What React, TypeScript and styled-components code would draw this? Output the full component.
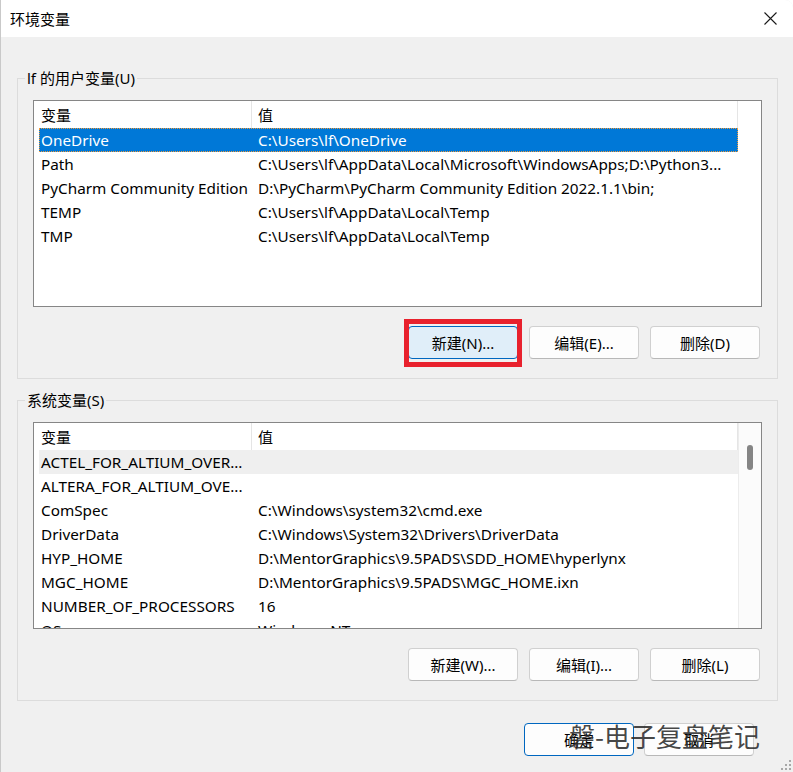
import React from "react";
import styled, { createGlobalStyle } from "styled-components";

const GlobalStyle = createGlobalStyle`
  html, body { margin: 0; padding: 0; background: #ffffff; }
  body {
    font-family: "Noto Sans", "Noto Sans CJK SC", sans-serif;
    color: #000;
  }
  * { box-sizing: border-box; }
`;

const Window = styled.div`
  position: relative;
  width: 793px;
  height: 772px;
  background: #f0f0f0;
  border-left: 1px solid #c9c9c9;
  border-top-right-radius: 8px;
  overflow: hidden;
  display: flex;
  flex-direction: column;
`;

const TitleBar = styled.div`
  height: 37px;
  background: #ffffff;
  display: flex;
  align-items: center;
  justify-content: space-between;
  padding-left: 9px;
  flex-shrink: 0;
`;

const Title = styled.div`
  font-family: "Noto Sans CJK SC", sans-serif;
  font-size: 15px;
  line-height: 20px;
`;

const CloseButton = styled.div`
  width: 46px;
  height: 37px;
  display: flex;
  align-items: center;
  justify-content: center;
`;

const Content = styled.div`
  padding: 31px 15px 0 16px;
  display: flex;
  flex-direction: column;
`;

const GroupBox = styled.fieldset<{ $mt?: number }>`
  margin: ${(p) => p.$mt ?? 0}px 0 0 0;
  padding: 12px 15px 19px 15px;
  border: 1px solid #dcdcdc;
  min-width: 0;
`;

const Legend = styled.legend`
  font-family: "Noto Sans", "Noto Sans CJK SC", sans-serif;
  font-size: 15px;
  line-height: 20px;
  padding: 0 2px;
  margin-left: -8px;
`;

const ListView = styled.div`
  height: 207px;
  border: 1px solid #868686;
  background: #ffffff;
  display: flex;
  overflow: hidden;
`;

const ListMain = styled.div`
  flex: 1;
  padding-left: 5px;
  overflow: hidden;
`;

const Header = styled.div`
  height: 27px;
  display: flex;
`;

const HeaderCell = styled.div<{ $w?: number }>`
  ${(p) => (p.$w ? `width: ${p.$w}px;` : "flex: 1;")}
  padding-left: ${(p) => (p.$w ? 2 : 6)}px;
  border-right: 1px solid #e5e5e5;
  font-family: "Noto Sans CJK SC", sans-serif;
  font-size: 15px;
  line-height: 27px;
  white-space: nowrap;
`;

const Row = styled.div<{ $state?: "selected" | "hover" }>`
  height: 24px;
  display: flex;
  background: ${(p) =>
    p.$state === "selected" ? "#0078d7" : p.$state === "hover" ? "#efefef" : "transparent"};
  color: ${(p) => (p.$state === "selected" ? "#ffffff" : "#000000")};
  outline: ${(p) => (p.$state === "selected" ? "1px dotted #f09a3a" : "none")};
  outline-offset: -1px;
`;

const Cell = styled.div<{ $w?: number }>`
  ${(p) => (p.$w ? `width: ${p.$w}px;` : "flex: 1;")}
  padding-left: ${(p) => (p.$w ? 2 : 6)}px;
  font-size: 15.3px;
  line-height: 24px;
  white-space: nowrap;
  overflow: hidden;
`;

const Side = styled.div<{ $scroll?: boolean }>`
  width: 23px;
  flex-shrink: 0;
  border-left: ${(p) => (p.$scroll ? "1px solid #ececec" : "none")};
  background: ${(p) => (p.$scroll ? "#fbfbfb" : "#ffffff")};
  display: flex;
  justify-content: center;
  padding-top: 22px;
`;

const Thumb = styled.div`
  width: 6px;
  height: 25px;
  border-radius: 3px;
  background: #858585;
`;

const ButtonRow = styled.div<{ $mt: number; $pr: number }>`
  display: flex;
  justify-content: flex-end;
  gap: 11px;
  margin-top: ${(p) => p.$mt}px;
  padding-right: ${(p) => p.$pr}px;
`;

const Button = styled.div<{ $variant?: "focus" | "default" }>`
  position: relative;
  width: 110px;
  height: 33px;
  display: flex;
  align-items: center;
  justify-content: center;
  border-radius: 4px;
  font-family: "Noto Sans", "Noto Sans CJK SC", sans-serif;
  font-size: 15px;
  background: ${(p) => (p.$variant === "focus" ? "#e0eef9" : "#fdfdfd")};
  border: 1px solid
    ${(p) => (p.$variant === "focus" || p.$variant === "default" ? "#0067c0" : "#d0d0d0")};
  border-bottom-color: ${(p) =>
    p.$variant === "focus" || p.$variant === "default" ? "#0067c0" : "#b8b8b8"};
`;

const Highlight = styled.div`
  position: absolute;
  left: -5px;
  right: -5px;
  top: -8px;
  bottom: -9px;
  border: 5px solid #e8212d;
  pointer-events: none;
`;

const BottomRow = styled.div`
  display: flex;
  justify-content: flex-end;
  gap: 10px;
  margin-top: 22px;
  padding-right: 39px;
`;

const Watermark = styled.div`
  position: absolute;
  left: 568px;
  top: 719px;
  font-family: "Noto Sans CJK SC", sans-serif;
  font-size: 26px;
  line-height: 34px;
  color: rgba(45, 45, 45, 0.88);
  white-space: nowrap;
  pointer-events: none;
`;

const Grip = styled.svg`
  position: absolute;
  right: 1px;
  bottom: 1px;
`;

type Item = { name: string; value: string; state?: "selected" | "hover" };

const userVars: Item[] = [
  { name: "OneDrive", value: "C:\\Users\\lf\\OneDrive", state: "selected" },
  { name: "Path", value: "C:\\Users\\lf\\AppData\\Local\\Microsoft\\WindowsApps;D:\\Python3..." },
  { name: "PyCharm Community Edition", value: "D:\\PyCharm\\PyCharm Community Edition 2022.1.1\\bin;" },
  { name: "TEMP", value: "C:\\Users\\lf\\AppData\\Local\\Temp" },
  { name: "TMP", value: "C:\\Users\\lf\\AppData\\Local\\Temp" },
];

const sysVars: Item[] = [
  { name: "ACTEL_FOR_ALTIUM_OVER...", value: "", state: "hover" },
  { name: "ALTERA_FOR_ALTIUM_OVE...", value: "" },
  { name: "ComSpec", value: "C:\\Windows\\system32\\cmd.exe" },
  { name: "DriverData", value: "C:\\Windows\\System32\\Drivers\\DriverData" },
  { name: "HYP_HOME", value: "D:\\MentorGraphics\\9.5PADS\\SDD_HOME\\hyperlynx" },
  { name: "MGC_HOME", value: "D:\\MentorGraphics\\9.5PADS\\MGC_HOME.ixn" },
  { name: "NUMBER_OF_PROCESSORS", value: "16" },
  { name: "OS", value: "Windows_NT" },
];

const COL1 = 213;

function VarList({ items, scroll }: { items: Item[]; scroll?: boolean }) {
  return (
    <ListView>
      <ListMain>
        <Header>
          <HeaderCell $w={COL1}>变量</HeaderCell>
          <HeaderCell>值</HeaderCell>
        </Header>
        {items.map((it) => (
          <Row key={it.name} $state={it.state}>
            <Cell $w={COL1}>{it.name}</Cell>
            <Cell>{it.value}</Cell>
          </Row>
        ))}
      </ListMain>
      <Side $scroll={scroll}>{scroll && <Thumb />}</Side>
    </ListView>
  );
}

export default function App() {
  return (
    <>
      <GlobalStyle />
      <Window>
        <TitleBar>
          <Title>环境变量</Title>
          <CloseButton>
            <svg width="13" height="13" viewBox="0 0 13 13">
              <path d="M0.5 0.5 L12.5 12.5 M12.5 0.5 L0.5 12.5" stroke="#1a1a1a" strokeWidth="1.1" />
            </svg>
          </CloseButton>
        </TitleBar>
        <Content>
          <GroupBox>
            <Legend>lf 的用户变量(U)</Legend>
            <VarList items={userVars} />
            <ButtonRow $mt={19} $pr={2}>
              <Button $variant="focus">
                新建(N)...
                <Highlight />
              </Button>
              <Button>编辑(E)...</Button>
              <Button>删除(D)</Button>
            </ButtonRow>
          </GroupBox>
          <GroupBox $mt={11}>
            <Legend>系统变量(S)</Legend>
            <VarList items={sysVars} scroll />
            <ButtonRow $mt={19} $pr={2}>
              <Button>新建(W)...</Button>
              <Button>编辑(I)...</Button>
              <Button>删除(L)</Button>
            </ButtonRow>
          </GroupBox>
        </Content>
        <BottomRow>
          <Button $variant="default">确定</Button>
          <Button>取消</Button>
        </BottomRow>
        <Watermark>磐-电子复盘笔记</Watermark>
        <Grip width="12" height="12" viewBox="0 0 12 12">
          {[
            [9, 1],
            [9, 5],
            [5, 5],
            [9, 9],
            [5, 9],
            [1, 9],
          ].map(([x, y]) => (
            <rect key={`${x}-${y}`} x={x} y={y} width="2" height="2" fill="#a8a8a8" />
          ))}
        </Grip>
      </Window>
    </>
  );
}
